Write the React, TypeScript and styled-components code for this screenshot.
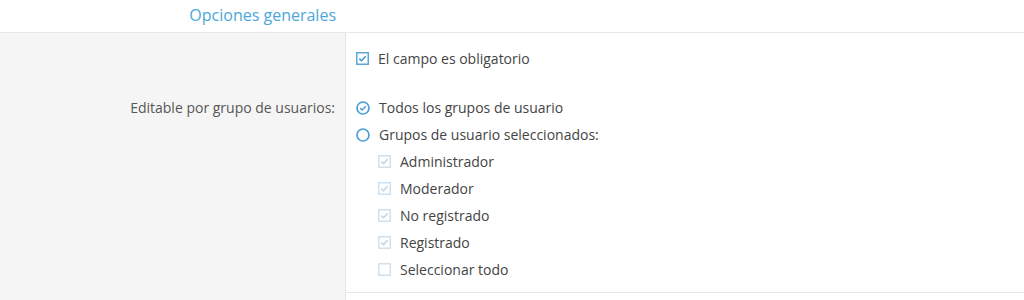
import React from 'react';
import styled, { createGlobalStyle } from 'styled-components';

const GlobalStyle = createGlobalStyle`
  body {
    margin: 0;
    background: #fff;
    font-family: 'Open Sans', 'Liberation Sans', sans-serif;
    color: #444;
  }
`;

const Page = styled.div`
  width: 1024px;
  height: 300px;
  overflow: hidden;
`;

const Header = styled.div`
  display: grid;
  grid-template-columns: 346px 1fr;
  height: 32px;
  border-bottom: 1px solid #e8e8e8;
`;

const Title = styled.div`
  text-align: right;
  padding-right: 10px;
  font-size: 16px;
  line-height: 30px;
  color: #4ba7d9;
`;

const Row = styled.div`
  display: grid;
  grid-template-columns: 346px 1fr;
`;

const Label = styled.div<{ $top: number }>`
  background: #f5f5f5;
  border-right: 1px solid #e6e6e6;
  text-align: right;
  padding: ${(p) => p.$top}px 10px 0 0;
  font-size: 14px;
  line-height: 27px;
  color: #555;
`;

const Field = styled.div<{ $top: number; $bottom: number; $line?: boolean }>`
  padding: ${(p) => p.$top}px 10px ${(p) => p.$bottom}px 10px;
  border-bottom: ${(p) => (p.$line ? '1px solid #e6e6e6' : 'none')};
`;

const Option = styled.div<{ $indent?: boolean }>`
  display: flex;
  align-items: center;
  gap: 9px;
  height: 27px;
  padding-left: ${(p) => (p.$indent ? '22px' : '0')};
  font-size: 14px;
  color: #444;
`;

const Filler = styled.div`
  background: #f5f5f5;
  border-right: 1px solid #e6e6e6;
  height: 20px;
`;

type BoxProps = { checked?: boolean; disabled?: boolean };

const CheckBox: React.FC<BoxProps> = ({ checked, disabled }) => {
  const border = disabled ? '#cfe1ee' : '#5ba7d8';
  const mark = disabled ? '#bcd4e6' : '#3c95cf';
  return (
    <svg width="13" height="13" viewBox="0 0 13 13">
      <rect x="0.75" y="0.75" width="11.5" height="11.5" fill="#fff" stroke={border} strokeWidth="1.5" />
      {checked && (
        <path d="M3.3 6.6 L5.5 8.7 L9.7 4.3" fill="none" stroke={mark} strokeWidth="1.5" />
      )}
    </svg>
  );
};

const Radio: React.FC<BoxProps> = ({ checked }) => (
  <svg width="14" height="14" viewBox="0 0 14 14">
    <circle cx="7" cy="7" r="6" fill="#fff" stroke="#4a9fd6" strokeWidth="1.7" />
    {checked && <path d="M4.2 7.1 L6.2 9 L9.8 5.2" fill="none" stroke="#4a9fd6" strokeWidth="1.5" />}
  </svg>
);

const groups = ['Administrador', 'Moderador', 'No registrado', 'Registrado'];

export default function App() {
  return (
    <Page>
      <GlobalStyle />
      <Header>
        <Title>Opciones generales</Title>
        <div />
      </Header>
      <Row>
        <Label $top={12} />
        <Field $top={12} $bottom={10}>
          <Option>
            <CheckBox checked />
            El campo es obligatorio
          </Option>
        </Field>
      </Row>
      <Row>
        <Label $top={12}>Editable por grupo de usuarios:</Label>
        <Field $top={12} $bottom={9} $line>
          <Option>
            <Radio checked />
            Todos los grupos de usuario
          </Option>
          <Option>
            <Radio />
            Grupos de usuario seleccionados:
          </Option>
          {groups.map((g) => (
            <Option key={g} $indent>
              <CheckBox checked disabled />
              {g}
            </Option>
          ))}
          <Option $indent>
            <CheckBox disabled />
            Seleccionar todo
          </Option>
        </Field>
      </Row>
      <Row>
        <Filler />
        <div />
      </Row>
    </Page>
  );
}
